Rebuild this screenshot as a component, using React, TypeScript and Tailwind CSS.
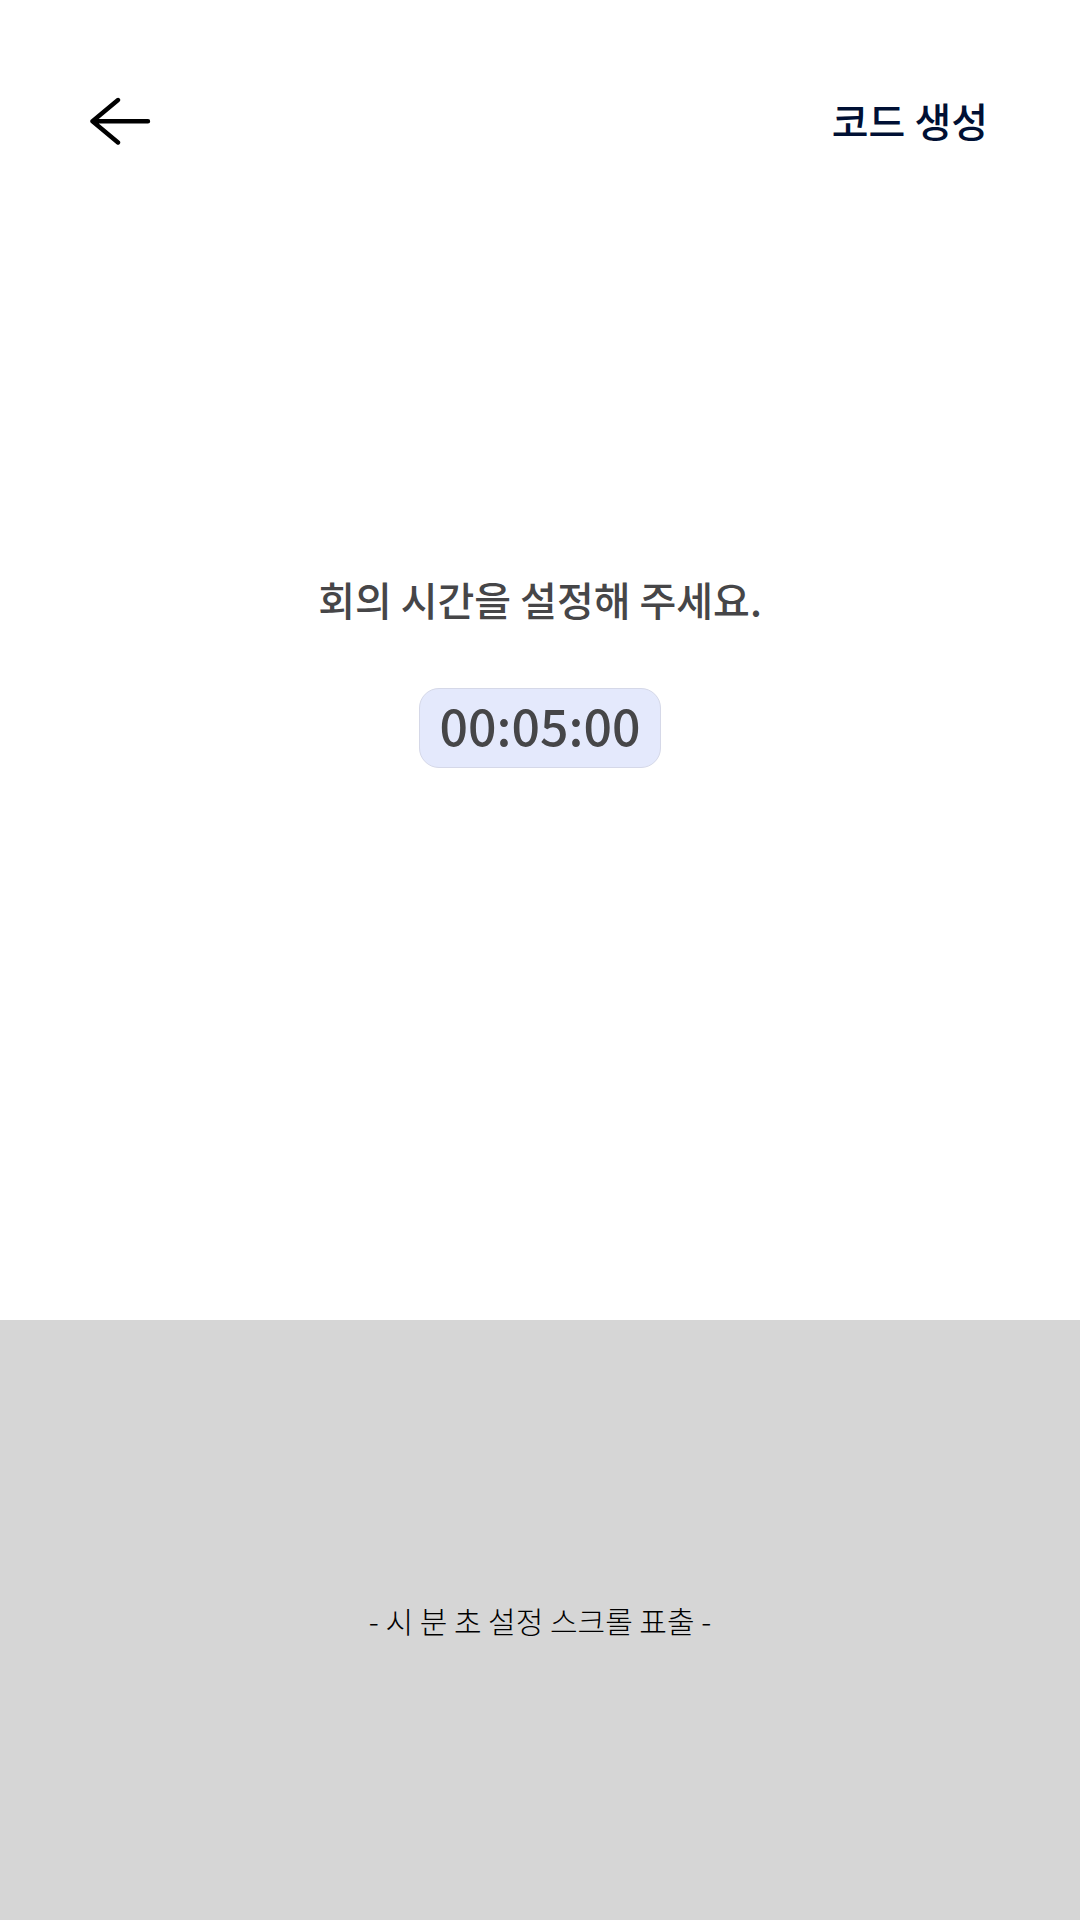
export default function App() {
  return (
    <main className="flex min-h-screen flex-col bg-white font-['Noto_Sans_CJK_KR','Noto_Sans',sans-serif]">
      <header className="flex items-center justify-between pr-[92px] pl-[90px] pt-[88px]">
        <button type="button" aria-label="뒤로" className="text-black">
          <svg className="h-16 w-16" viewBox="0 0 64 64" fill="none" stroke="currentColor" strokeWidth="4.4" strokeLinecap="round" strokeLinejoin="round">
            <path d="M28 12 2.5 33.3 28 54.5M2.5 33.3H58" />
          </svg>
        </button>
        <button type="button" className="text-[40px] leading-[60px] font-medium text-[#001034]">
          코드 생성
        </button>
      </header>
      <section className="flex flex-1 flex-col items-center pt-[417px]">
        <label htmlFor="meeting-time" className="text-[40px] leading-[60px] font-medium text-[#464648]">
          회의 시간을 설정해 주세요.
        </label>
        <input
          id="meeting-time"
          defaultValue="00:05:00"
          className="mt-[59px] h-[80px] w-[242px] rounded-[20px] border border-[#d5d8e8] bg-[#e4e9fc] pb-[8px] text-center text-[50px] font-medium text-[#464648]"
        />
      </section>
      <section className="flex h-[600px] items-center justify-center bg-[#d6d6d6]">
        <p className="text-[30px] font-light text-black">- 시 분 초 설정 스크롤 표출 -</p>
      </section>
    </main>
  );
}
